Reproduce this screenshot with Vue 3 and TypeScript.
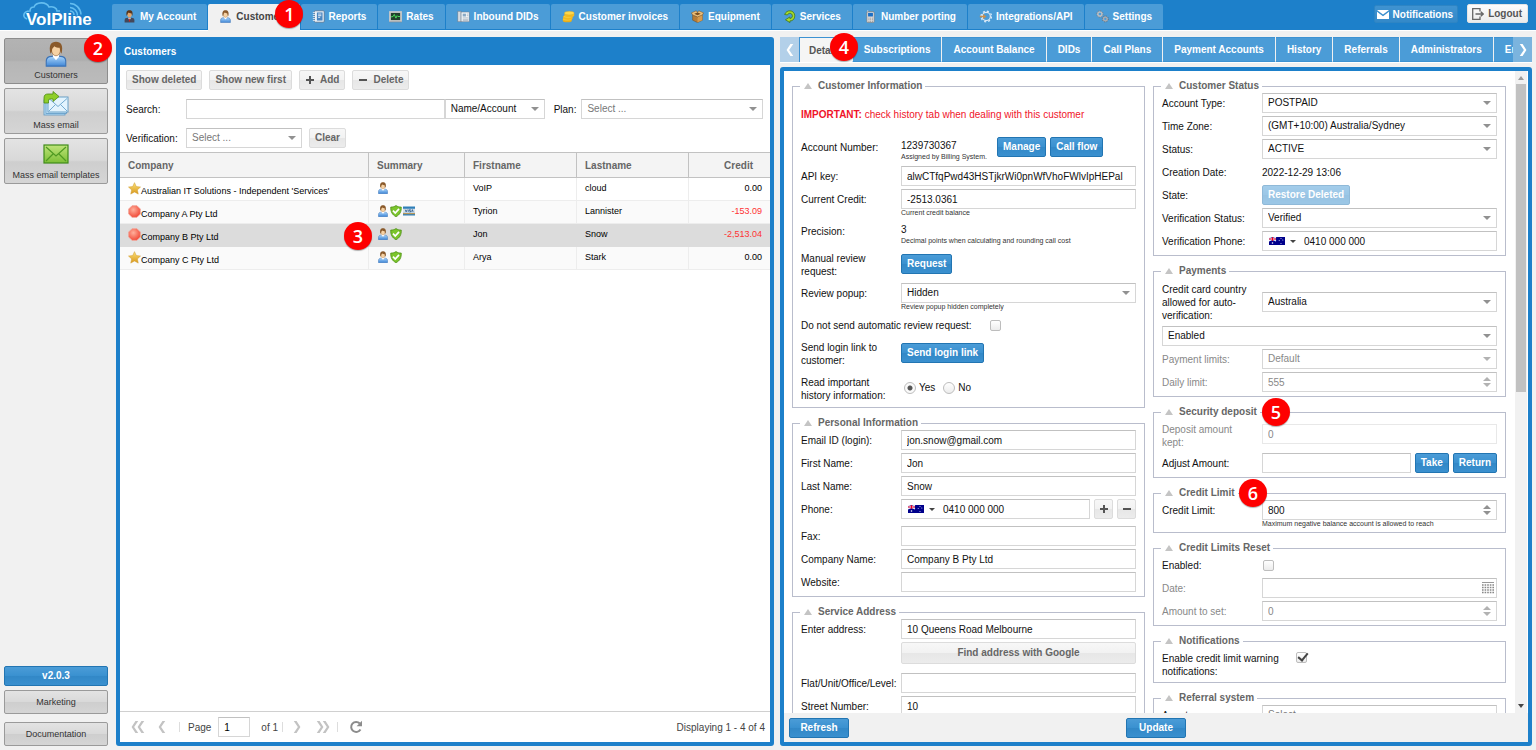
<script setup lang="ts">
import { ref } from 'vue'

interface NavTab {
  label: string
  icon: string
  badge?: number
}

interface Customer {
  company: string
  mark: 'star' | 'stop'
  summary: string[]
  first: string
  last: string
  credit: string
  badge?: number
}

const navTabs: NavTab[] = [
  { label: 'My Account', icon: 'user-dark' },
  { label: 'Customers', icon: 'user', badge: 1 },
  { label: 'Reports', icon: 'report' },
  { label: 'Rates', icon: 'rates' },
  { label: 'Inbound DIDs', icon: 'dids' },
  { label: 'Customer invoices', icon: 'coins' },
  { label: 'Equipment', icon: 'box' },
  { label: 'Services', icon: 'services' },
  { label: 'Number porting', icon: 'phone' },
  { label: 'Integrations/API', icon: 'api' },
  { label: 'Settings', icon: 'gears' },
]
const activeNav = ref('Customers')

const sideItems = [
  { label: 'Customers', icon: 'user', badge: 2 },
  { label: 'Mass email', icon: 'mails' },
  { label: 'Mass email templates', icon: 'mail-green' },
]
const activeSide = ref('Customers')

const detailTabs = [
  'Details', 'Subscriptions', 'Account Balance', 'DIDs', 'Call Plans', 'Payment Accounts',
  'History', 'Referrals', 'Administrators', 'Endpoints',
]
const activeDetail = ref('Details')

const customers: Customer[] = [
  { company: "Australian IT Solutions - Independent 'Services'", mark: 'star', summary: ['user'], first: 'VoIP', last: 'cloud', credit: '0.00' },
  { company: 'Company A Pty Ltd', mark: 'stop', summary: ['user', 'shield', 'card'], first: 'Tyrion', last: 'Lannister', credit: '-153.09' },
  { company: 'Company B Pty Ltd', mark: 'stop', summary: ['user', 'shield'], first: 'Jon', last: 'Snow', credit: '-2,513.04', badge: 3 },
  { company: 'Company C Pty Ltd', mark: 'star', summary: ['user', 'shield'], first: 'Arya', last: 'Stark', credit: '0.00' },
]
const selected = ref('Company B Pty Ltd')
const readInfo = ref('yes')
</script>

<template>
  <svg class="sprite" aria-hidden="true">
    <defs>
      <linearGradient id="gBlue" x1="0" y1="0" x2="0" y2="1"><stop offset="0" stop-color="#a9d4fa" /><stop offset="1" stop-color="#3f86d6" /></linearGradient>
      <linearGradient id="gGold" x1="0" y1="0" x2="0" y2="1"><stop offset="0" stop-color="#fbe27a" /><stop offset="1" stop-color="#d9981c" /></linearGradient>
      <radialGradient id="gRed" cx=".4" cy=".35" r=".7"><stop offset="0" stop-color="#ffb09c" /><stop offset="1" stop-color="#f04432" /></radialGradient>
      <linearGradient id="gGreen" x1="0" y1="0" x2="0" y2="1"><stop offset="0" stop-color="#bfe47a" /><stop offset="1" stop-color="#7cbf36" /></linearGradient>
    </defs>
    <symbol id="user" viewBox="0 0 16 16">
      <path d="M2 15.500v-3c0-2 1.600-3 3.500-3h5c2 0 3.500 1 3.500 3v3z" fill="url(#gBlue)" stroke="#3c74b8" stroke-width=".7" />
      <path d="M6 9.500l2 2.300 2-2.300-.5-1.500h-3z" fill="#fff" />
      <ellipse cx="8" cy="5.300" rx="2.800" ry="3.800" fill="#f6d2a4" stroke="#a06a35" stroke-width=".4" />
      <path d="M4.600 7.800C3.300 2.500 5 .4 8 .4s4.700 2.100 3.400 7.400c-.8-1-1-2.300-1.100-3.600C9 4.200 7.700 3.900 7 3.200 6.300 4 5.700 4.600 5.600 5.200c0 1-.3 2-1 2.600z" fill="#8a5a2b" />
    </symbol>
    <symbol id="user-dark" viewBox="0 0 16 16">
      <path d="M2 15.500v-3c0-2 1.600-3 3.500-3h5c2 0 3.500 1 3.500 3v3z" fill="#44485a" />
      <path d="M6.200 9.500L8 13l1.800-3.500z" fill="#f0f0f0" /><path d="M7.600 10.500h.8l.4 3.500H7.200z" fill="#c22" />
      <ellipse cx="8" cy="5.300" rx="2.800" ry="3.800" fill="#e2a76f" />
      <path d="M4.600 7.500C3.300 2.500 5 .4 8 .4s4.700 2.100 3.400 7.100L10.300 4C9 4.200 7.500 3.800 7 3.200 6.300 4 5.700 4.600 5.600 5.200z" fill="#5b3518" />
    </symbol>
    <symbol id="report" viewBox="0 0 16 16">
      <rect x="3" y="1" width="12" height="14" rx="1" fill="#eef5fb" stroke="#52708e" stroke-width="1" />
      <rect x="6" y="3" width="7" height="10" fill="#4a86c0" /><path d="M7.500 5h4M7.500 7h4M7.500 9h2.500" stroke="#fff" stroke-width="1" />
      <path d="M1 3h3M1 5.500h3M1 8h3M1 10.500h3M1 13h3" stroke="#dfe6ee" stroke-width="1.100" />
    </symbol>
    <symbol id="rates" viewBox="0 0 16 16">
      <rect x="1.200" y="2.500" width="13.600" height="11" fill="#20402c" stroke="#c9c9c9" stroke-width="2.200" /><path d="M.3 14.700h15.400" stroke="#8a8a8a" stroke-width=".8" />
      <path d="M2.500 8.500l2.500-.5 1.500-2.500 2 4.500 1.500-3 1 1h2.500" fill="none" stroke="#4be05a" stroke-width="1.200" />
    </symbol>
    <symbol id="dids" viewBox="0 0 16 16">
      <rect x="1" y="1.500" width="4" height="13" fill="#d4dbe2" stroke="#6e7f90" stroke-width=".7" /><rect x="5" y="2.500" width="10" height="12" fill="#f5f8fa" stroke="#6e7f90" stroke-width=".7" />
      <rect x="7" y="4.500" width="4" height="3.500" fill="#89a9c4" /><path d="M12 5h2M12 7h2M7 9.700h7M7 11.500h7M7 13h7" stroke="#8797a6" stroke-width=".7" />
    </symbol>
    <symbol id="coins" viewBox="0 0 16 16">
      <path d="M1 11.500v2c0 1 2.400 1.700 5.500 1.700s5.500-.7 5.500-1.700v-2z" fill="#e8ad18" /><ellipse cx="6.500" cy="11.300" rx="5.500" ry="2" fill="#fbd03a" stroke="#d9a01a" stroke-width=".4" />
      <path d="M1.500 8v2.500c0 1 2.400 1.700 5.800 1.700s5.700-.7 5.700-1.700V8z" fill="#f3bb22" /><ellipse cx="7.300" cy="8" rx="5.700" ry="2" fill="#fbd03a" stroke="#d9a01a" stroke-width=".4" />
      <path d="M3 4v3c0 1 2.400 1.700 6 1.700S15 8 15 7V4z" fill="#f3bb22" /><ellipse cx="9" cy="3.800" rx="6" ry="2.300" fill="#fdd84c" stroke="#d9a01a" stroke-width=".4" />
    </symbol>
    <symbol id="box" viewBox="0 0 16 16">
      <path d="M2 6l6 2.500L14 6v6.500L8 15.500l-6-3z" fill="#b77c35" stroke="#70471a" stroke-width=".6" /><path d="M8 8.500v7l6-3V6z" fill="#d69b4e" />
      <path d="M2 6L.5 3.500 6.500 1 8 3.200 9.500 1l6 2.500L14 6 8 8.500z" fill="#ecc07a" stroke="#70471a" stroke-width=".6" /><path d="M4 4.600L8 3.200l4 1.400L8 6.500z" fill="#7c4d1d" />
    </symbol>
    <symbol id="services" viewBox="0 0 16 16">
      <path d="M2 5.500C3.500 2 6 1 8.500 1c3.500 0 6 2.800 6 6.200 0 3.800-2.500 6.300-6 6.300v2L3 12l5.500-3.500v2c1.700 0 3-1.300 3-3.200 0-1.800-1.200-3.200-3-3.200-1.400 0-2.300.6-3 2z" fill="#a5d92b" stroke="#3f6f12" stroke-width=".9" />
    </symbol>
    <symbol id="phone" viewBox="0 0 16 16">
      <path d="M4.500 3V.5" stroke="#ddd" stroke-width="1.500" /><rect x="3.500" y="2" width="9" height="13.500" rx="1.500" fill="#e1e1e1" stroke="#777" stroke-width=".8" /><rect x="5" y="3.500" width="6" height="4.500" fill="#1c6fc4" />
      <path d="M5.500 10h1.200m1 0h1.200m1 0h1M5.500 12h1.200m1 0h1.200m1 0h1M5.500 14h1.200m1 0h1.200m1 0h1" stroke="#777" stroke-width="1" />
    </symbol>
    <symbol id="api" viewBox="0 0 16 16">
      <circle cx="9" cy="8" r="5" fill="none" stroke="#d8e9f7" stroke-width="1.500" /><circle cx="9" cy="8" r="6.500" fill="none" stroke="#d8e9f7" stroke-width="1.600" stroke-dasharray="2.500 2.600" />
      <path d="M1 7h4V5l4 3-4 3V9H1z" fill="#c98f4d" />
    </symbol>
    <symbol id="gears" viewBox="0 0 16 16">
      <circle cx="4.800" cy="5" r="2.600" fill="none" stroke="#b9bec4" stroke-width="2" /><circle cx="4.800" cy="5" r="4" fill="none" stroke="#7b8188" stroke-width="1.200" stroke-dasharray="1.500 1.600" />
      <circle cx="11.500" cy="11" r="2.400" fill="none" stroke="#a8adb4" stroke-width="2" /><circle cx="11.500" cy="11" r="3.700" fill="none" stroke="#666c73" stroke-width="1.200" stroke-dasharray="1.400 1.500" />
    </symbol>
    <symbol id="mails" viewBox="0 0 26 26">
      <rect x="1" y="9" width="21" height="15" fill="#b9def5" stroke="#5c97c2" stroke-width=".8" /><rect x="3" y="7.500" width="20.500" height="15" fill="#cbe8fa" stroke="#5c97c2" stroke-width=".8" /><rect x="5" y="6" width="20" height="15" fill="#e3f4fe" stroke="#5c97c2" stroke-width=".9" />
      <path d="M6 7.500l9 8 9-8M6 20l6.500-6.500M24 20l-6.500-6.500" fill="none" stroke="#74acd2" stroke-width="1" />
      <path d="M1 12V7c0-3 1.500-4 4-4h5V.5L16 5.500l-6 5V8H7C5.500 8 5.500 9 5.500 12z" fill="#8fce2a" stroke="#4c8c12" stroke-width=".8" />
    </symbol>
    <symbol id="mail-green" viewBox="0 0 26 26">
      <rect x="1" y="4" width="24" height="18" fill="url(#gGreen)" stroke="#3f8b1a" stroke-width="1.200" /><path d="M3 6l10 9 10-9M3 20l7.500-7.500M23 20l-7.500-7.500" fill="none" stroke="#4f9a22" stroke-width="1.200" />
    </symbol>
    <symbol id="star" viewBox="0 0 16 16"><path d="M8 .8l2.200 4.800 5.200.6-3.900 3.500 1.100 5.200L8 12.300l-4.600 2.600 1.100-5.200L.6 6.200l5.200-.6z" fill="url(#gGold)" stroke="#d09a2a" stroke-width=".6" /></symbol>
    <symbol id="stop" viewBox="0 0 16 16"><path d="M5 .8h6L15.200 5v6L11 15.200H5L.8 11V5z" fill="url(#gRed)" stroke="#f2a396" stroke-width="1" /></symbol>
    <symbol id="shield" viewBox="0 0 16 16">
      <path d="M8 .8c2 1.400 4.300 2 7 2 .3 6-2 10.500-7 12.700C3 13.300.7 8.800 1 2.800c2.700 0 5-.6 7-2z" fill="#7cc52c" stroke="#4c8f14" stroke-width="1.100" /><path d="M4 7.500l3 3.200 5-5.500" fill="none" stroke="#fff" stroke-width="2.300" />
    </symbol>
    <symbol id="card" viewBox="0 0 16 16">
      <rect x="0" y="2" width="16" height="12" fill="#2f7fb8" /><rect x="0" y="5" width="16" height="5.500" fill="#d5e0ea" /><path d="M3 6.200l1.200 3L5.500 6.200M7 6.200v3M8.500 9.200H10V7.700H8.700V6.200h1.500M11.500 9.200l1-3 1 3" fill="none" stroke="#1b4f86" stroke-width="1" /><rect x="0" y="11" width="16" height="1.200" fill="#e8a33d" />
    </symbol>
    <symbol id="flag" viewBox="0 0 16 8">
      <rect width="16" height="8" fill="#00008b" /><path d="M0 0l7 4M7 0L0 4" stroke="#fff" stroke-width="1.100" /><path d="M3.500 0v4M0 2h7" stroke="#fff" stroke-width="1.600" /><path d="M3.500 0v4M0 2h7" stroke="#e4002b" stroke-width="1" />
      <circle cx="3.500" cy="6" r=".8" fill="#fff" /><g fill="#dfe3ff"><circle cx="12" cy="1.400" r=".5" /><circle cx="10.200" cy="3.400" r=".5" /><circle cx="13.800" cy="3" r=".5" /><circle cx="12" cy="6.500" r=".5" /></g>
    </symbol>
    <symbol id="plus" viewBox="0 0 10 10"><path d="M5 1v8M1 5h8" stroke="#555" stroke-width="2" /></symbol>
    <symbol id="minus" viewBox="0 0 10 10"><path d="M1 5h8" stroke="#555" stroke-width="2" /></symbol>
    <symbol id="chev" viewBox="0 0 9 14"><path d="M8.300 0L3.500 7l4.800 7H5L.5 7 5 0z" fill="currentColor" /></symbol>
  </svg>

  <div class="app">
    <header class="top">
      <a class="logo" href="#" aria-label="VoIPline">
        <svg class="logo-art" viewBox="0 0 112 30" aria-hidden="true">
          <path d="M27 19c-5-2-4-8 3-8 0-3 2-4 4-4C36 2 46 1 49 7c4-1 8 1 8 4h3" fill="none" stroke="#63bdf0" stroke-width="1.600" />
          <g fill="none" stroke="#63bdf0" stroke-width="1.600"><path d="M70 11a4 4 0 0 1 4 4" /><path d="M70 7.500a8 8 0 0 1 7.500 8" /><path d="M70 3.500a11 12 0 0 1 11 11" /></g>
        </svg>
        <span class="logo-text">VoIPline</span>
      </a>
      <nav class="nav">
        <button v-for="t in navTabs" :key="t.label" type="button" class="nav-tab" :class="{ on: t.label === activeNav }" @click="activeNav = t.label">
          <svg class="i13"><use :href="'#' + t.icon" /></svg>
          <span>{{ t.label }}</span>
          <b v-if="t.badge" class="badge b1">{{ t.badge }}</b>
        </button>
      </nav>
      <div class="top-actions">
        <button type="button" class="notify">
          <svg class="i-mail" viewBox="0 0 12 9"><path d="M0 0h12L6 4.500z" fill="#fff" /><path d="M0 1.800l6 4.400 6-4.400V9H0z" fill="#fff" /></svg>
          Notifications
        </button>
        <button type="button" class="logout">
          <svg class="i12" viewBox="0 0 12 12"><path d="M8 3.500V.7H.7v10.600H8V8.500M3.500 6h7.500M8.800 3.700L11.200 6 8.800 8.300" fill="none" stroke="#666" stroke-width="1.300" /></svg>
          Logout
        </button>
      </div>
    </header>

    <main class="body">
      <aside class="side">
        <button v-for="s in sideItems" :key="s.label" type="button" class="side-btn" :class="{ on: s.label === activeSide }" @click="activeSide = s.label">
          <svg class="i26"><use :href="'#' + s.icon" /></svg>
          <span>{{ s.label }}</span>
          <b v-if="s.badge" class="badge b2">{{ s.badge }}</b>
        </button>
        <div class="side-foot">
          <button type="button" class="btn blue">v2.0.3</button>
          <button type="button" class="side-link">Marketing</button>
          <button type="button" class="side-link doc">Documentation</button>
        </div>
      </aside>

      <section class="panel list">
        <h1 class="panel-title">Customers</h1>
        <div class="filters">
          <div class="line">
            <button type="button" class="btn">Show deleted</button>
            <button type="button" class="btn">Show new first</button>
            <button type="button" class="btn"><svg class="i10"><use href="#plus" /></svg>Add</button>
            <button type="button" class="btn"><svg class="i10"><use href="#minus" /></svg>Delete</button>
          </div>
          <div class="line search-line">
            <label class="flabel" for="search">Search:</label>
            <input id="search" class="field grow-search" type="text">
            <span class="combo by"><select aria-label="Search by"><option>Name/Account</option></select></span>
            <label class="plan-label" for="plan">Plan:</label>
            <span class="combo plan muted"><select id="plan"><option>Select ...</option></select></span>
          </div>
          <div class="line">
            <label class="flabel" for="verif">Verification:</label>
            <span class="combo verif muted"><select id="verif"><option>Select ...</option></select></span>
            <button type="button" class="btn">Clear</button>
          </div>
        </div>
        <div class="grid-wrap">
          <table class="grid">
            <colgroup><col class="c1"><col class="c2"><col class="c3"><col class="c3"><col class="c4"></colgroup>
            <thead>
              <tr><th>Company</th><th>Summary</th><th>Firstname</th><th>Lastname</th><th class="num">Credit</th></tr>
            </thead>
            <tbody>
              <tr v-for="c in customers" :key="c.company" :class="{ sel: c.company === selected }" @click="selected = c.company">
                <td class="company">
                  <span class="cell"><svg class="i13"><use :href="'#' + c.mark" /></svg><span class="cname">{{ c.company }}</span></span>
                  <b v-if="c.badge" class="badge b3">{{ c.badge }}</b>
                </td>
                <td><span class="cell"><svg v-for="s in c.summary" :key="s" class="i12"><use :href="'#' + s" /></svg></span></td>
                <td>{{ c.first }}</td>
                <td>{{ c.last }}</td>
                <td class="num" :class="{ neg: c.credit.startsWith('-') }">{{ c.credit }}</td>
              </tr>
            </tbody>
          </table>
        </div>
        <footer class="pager">
          <button type="button" class="pg wide" aria-label="First page"><svg class="chev"><use href="#chev" /></svg><svg class="chev"><use href="#chev" /></svg></button>
          <button type="button" class="pg" aria-label="Previous page"><svg class="chev"><use href="#chev" /></svg></button>
          <i class="sep" />
          <label for="page">Page</label>
          <input id="page" class="field page" type="text" value="1">
          <span>of 1</span>
          <i class="sep near" />
          <button type="button" class="pg" aria-label="Next page"><svg class="chev flip"><use href="#chev" /></svg></button>
          <button type="button" class="pg wide" aria-label="Last page"><svg class="chev flip"><use href="#chev" /></svg><svg class="chev flip"><use href="#chev" /></svg></button>
          <i class="sep" />
          <button type="button" class="pg" aria-label="Reload">
            <svg class="i14" viewBox="0 0 14 14"><path d="M11.500 9.500A5 5 0 1 1 10.800 3.500" fill="none" stroke="#8c8c8c" stroke-width="2" /><path d="M13 .8v5.400H7.600z" fill="#8c8c8c" /></svg>
          </button>
          <span class="shown">Displaying 1 - 4 of 4</span>
        </footer>
      </section>

      <section class="detail">
        <div class="strip">
          <button type="button" class="scroller" aria-label="Scroll tabs left"><svg class="chev"><use href="#chev" /></svg></button>
          <div class="tabs">
            <button v-for="t in detailTabs" :key="t" type="button" class="tab" :class="{ on: t === activeDetail }" @click="activeDetail = t">{{ t }}</button>
          </div>
          <button type="button" class="scroller next" aria-label="Scroll tabs right"><svg class="chev flip"><use href="#chev" /></svg></button>
          <b class="badge b4">4</b>
        </div>

        <div class="panel form-panel">
          <div class="scroll">
            <form class="columns" @submit.prevent>
              <div class="col">
                <fieldset>
                  <legend>Customer Information</legend>
                  <p class="important"><b>IMPORTANT:</b> check history tab when dealing with this customer</p>
                  <div class="row h-note">
                    <span class="lab">Account Number:</span>
                    <div class="inline">
                      <div class="acc"><output class="val">1239730367</output><small>Assigned by Billing System.</small></div>
                      <button type="button" class="btn blue">Manage</button>
                      <button type="button" class="btn blue">Call flow</button>
                    </div>
                  </div>
                  <div class="row"><label class="lab" for="key">API key:</label><input id="key" class="field" type="text" value="alwCTfqPwd43HSTjkrWi0pnWfVhoFWlvIpHEPal"></div>
                  <div class="row h-help"><label class="lab" for="credit">Current Credit:</label><div><input id="credit" class="field" type="text" value="-2513.0361"><small>Current credit balance</small></div></div>
                  <div class="row h-prec"><span class="lab">Precision:</span><div><output class="val">3</output><small>Decimal points when calculating and rounding call cost</small></div></div>
                  <div class="row h-prec two"><span class="lab multi">Manual review request:</span><button type="button" class="btn blue">Request</button></div>
                  <div class="row h-help"><label class="lab" for="popup">Review popup:</label><div><span class="combo"><select id="popup"><option>Hidden</option></select></span><small>Review popup hidden completely</small></div></div>
                  <div class="row wide-label h-check"><label class="lab" for="noauto">Do not send automatic review request:</label><input id="noauto" class="tick" type="checkbox"></div>
                  <div class="row h-login two"><span class="lab multi">Send login link to customer:</span><button type="button" class="btn blue">Send login link</button></div>
                  <div class="row two h-read">
                    <span id="readinfo" class="lab multi">Read important history information:</span>
                    <div class="radios" role="radiogroup" aria-labelledby="readinfo">
                      <label><input v-model="readInfo" type="radio" name="read" value="yes">Yes</label>
                      <label><input v-model="readInfo" type="radio" name="read" value="no">No</label>
                    </div>
                  </div>
                </fieldset>

                <fieldset>
                  <legend>Personal Information</legend>
                  <div class="row"><label class="lab" for="email">Email ID (login):</label><input id="email" class="field" type="text" value="jon.snow@gmail.com"></div>
                  <div class="row"><label class="lab" for="fn">First Name:</label><input id="fn" class="field" type="text" value="Jon"></div>
                  <div class="row"><label class="lab" for="ln">Last Name:</label><input id="ln" class="field" type="text" value="Snow"></div>
                  <div class="row h-phone">
                    <label class="lab" for="phone-no">Phone:</label>
                    <div class="inline phones">
                      <span class="phone"><button type="button" class="country" aria-label="Country"><svg class="flag"><use href="#flag" /></svg></button><input id="phone-no" type="text" value="0410 000 000"></span>
                      <button type="button" class="btn sq" aria-label="Add phone"><svg class="i10"><use href="#plus" /></svg></button>
                      <button type="button" class="btn sq" aria-label="Remove phone"><svg class="i10"><use href="#minus" /></svg></button>
                    </div>
                  </div>
                  <div class="row"><label class="lab" for="fax">Fax:</label><input id="fax" class="field" type="text"></div>
                  <div class="row"><label class="lab" for="comp">Company Name:</label><input id="comp" class="field" type="text" value="Company B Pty Ltd"></div>
                  <div class="row"><label class="lab" for="web">Website:</label><input id="web" class="field" type="text"></div>
                </fieldset>

                <fieldset>
                  <legend>Service Address</legend>
                  <div class="row"><label class="lab" for="addr">Enter address:</label><input id="addr" class="field" type="text" value="10 Queens Road Melbourne"></div>
                  <div class="row h-find"><span /><button type="button" class="btn find">Find address with Google</button></div>
                  <div class="row"><label class="lab" for="flat">Flat/Unit/Office/Level:</label><input id="flat" class="field" type="text"></div>
                  <div class="row"><label class="lab" for="street">Street Number:</label><input id="street" class="field" type="text" value="10"></div>
                </fieldset>
              </div>

              <div class="col">
                <fieldset>
                  <legend>Customer Status</legend>
                  <div class="row"><label class="lab" for="atype">Account Type:</label><span class="combo"><select id="atype"><option>POSTPAID</option></select></span></div>
                  <div class="row"><label class="lab" for="tz">Time Zone:</label><span class="combo"><select id="tz"><option>(GMT+10:00) Australia/Sydney</option></select></span></div>
                  <div class="row"><label class="lab" for="status">Status:</label><span class="combo"><select id="status"><option>ACTIVE</option></select></span></div>
                  <div class="row"><span class="lab">Creation Date:</span><output class="lab">2022-12-29 13:06</output></div>
                  <div class="row"><span class="lab">State:</span><button type="button" class="btn blue" disabled>Restore Deleted</button></div>
                  <div class="row"><label class="lab" for="vs">Verification Status:</label><span class="combo"><select id="vs"><option>Verified</option></select></span></div>
                  <div class="row"><label class="lab" for="vp">Verification Phone:</label><span class="phone"><button type="button" class="country" aria-label="Country"><svg class="flag"><use href="#flag" /></svg></button><input id="vp" type="text" value="0410 000 000"></span></div>
                </fieldset>

                <fieldset>
                  <legend>Payments</legend>
                  <div class="row h-country"><label class="lab multi" for="cc">Credit card country allowed for auto-verification:</label><span class="combo"><select id="cc"><option>Australia</option></select></span></div>
                  <div class="row full"><span class="combo"><select aria-label="Auto-verification"><option>Enabled</option></select></span></div>
                  <div class="row off"><label class="lab" for="pl">Payment limits:</label><span class="combo"><select id="pl" disabled><option>Default</option></select></span></div>
                  <div class="row off"><label class="lab" for="dl">Daily limit:</label><span class="spin"><input id="dl" class="field" type="text" value="555" disabled></span></div>
                </fieldset>

                <fieldset>
                  <legend>Security deposit<b class="badge b5">5</b></legend>
                  <div class="row off h-deposit"><label class="lab multi" for="dep">Deposit amount kept:</label><input id="dep" class="field faint" type="text" value="0" disabled></div>
                  <div class="row"><label class="lab" for="adj">Adjust Amount:</label>
                    <div class="inline adj"><input id="adj" class="field" type="text"><button type="button" class="btn blue">Take</button><button type="button" class="btn blue">Return</button></div>
                  </div>
                </fieldset>

                <fieldset>
                  <legend>Credit Limit<b class="badge b6">6</b></legend>
                  <div class="row"><label class="lab" for="cl">Credit Limit:</label><div><span class="spin"><input id="cl" class="field" type="text" value="800"></span><small>Maximum negative balance account is allowed to reach</small></div></div>
                </fieldset>

                <fieldset>
                  <legend>Credit Limits Reset</legend>
                  <div class="row"><label class="lab" for="en">Enabled:</label><input id="en" class="tick" type="checkbox"></div>
                  <div class="row off"><label class="lab" for="date">Date:</label>
                    <span class="date"><input id="date" class="field" type="text" disabled>
                      <svg class="cal" viewBox="0 0 12 12"><path d="M0 .5h12" stroke="#999" stroke-width="1" /><path d="M0 3h12M0 5.500h12M0 8h12M0 10.500h12" stroke="#888" stroke-width="1.400" stroke-dasharray="1.600 1" /></svg>
                    </span>
                  </div>
                  <div class="row off"><label class="lab" for="amt">Amount to set:</label><span class="spin"><input id="amt" class="field" type="text" value="0" disabled></span></div>
                </fieldset>

                <fieldset>
                  <legend>Notifications</legend>
                  <div class="row h-notif"><label class="lab multi" for="warn">Enable credit limit warning notifications:</label><input id="warn" class="tick" type="checkbox" checked></div>
                </fieldset>

                <fieldset>
                  <legend>Referral system</legend>
                  <div class="row"><label class="lab" for="agent">Agent:</label><span class="combo muted"><select id="agent"><option>Select ...</option></select></span></div>
                </fieldset>
              </div>
            </form>
            <div class="bar" aria-hidden="true"><i class="up" /><i class="thumb" /><i class="down" /></div>
          </div>
          <footer class="form-foot">
            <button type="button" class="btn blue">Refresh</button>
            <button type="button" class="btn blue">Update</button>
            <span class="pad" />
          </footer>
        </div>
      </section>
    </main>
  </div>
</template>

<style>
html, body { margin: 0; height: 100%; overflow: hidden; }
</style>

<style scoped>
* { box-sizing: border-box; }
button, input, select { font: inherit; color: inherit; margin: 0; }
button { cursor: pointer; padding: 0; white-space: nowrap; }
svg { display: block; flex: none; }
.sprite { position: absolute; width: 0; height: 0; }
.app { height: 100vh; display: flex; flex-direction: column; background: #f1f1f1; font: 10px/13px "Liberation Sans", Arial, sans-serif; color: #111; }
.i10 { width: 10px; height: 10px; }
.i12 { width: 12px; height: 12px; }
.i13 { width: 13px; height: 13px; }
.i14 { width: 14px; height: 14px; }
.i26 { width: 26px; height: 26px; }
.badge { position: absolute; z-index: 5; width: 28px; height: 28px; border-radius: 50%; background: #fe0000; color: #fff; font: 600 18px/28px "Open Sans", sans-serif; text-align: center; box-shadow: 0 1px 1px rgba(0, 0, 0, .3); }

/* top bar */
.top { flex: none; height: 31px; display: flex; align-items: stretch; background: #1d80ca; border-bottom: 1px solid #fff; }
.logo { flex: none; width: 112px; position: relative; text-decoration: none; }
.logo-art { width: 112px; height: 30px; }
.logo-text { position: absolute; left: 26px; top: 10px; font: bold 17px/20px "Liberation Sans", Arial, sans-serif; color: #fff; }
.nav { display: flex; gap: 1px; padding-top: 4px; }
.nav-tab { position: relative; display: flex; align-items: center; gap: 4px; border: 0; border-bottom: 1px solid #1d80ca; border-radius: 2px 2px 0 0; background: #4b9cd7; color: #fff; padding: 0 11px 1px 11px; font-weight: bold; }
.nav-tab.on { background: #f1f1f1; border-color: #f1f1f1; color: #444; margin-bottom: -1px; }
.b1 { left: 67px; top: -4px; }
.top-actions { margin-left: auto; display: flex; gap: 9px; padding: 4px 8px 0 0; align-items: flex-start; font-weight: bold; }
.notify, .logout { display: flex; align-items: center; gap: 4px; border-radius: 2px; height: 19px; }
.notify { height: 18px; margin-top: 1px; padding: 0 4px 0 2px; border: 1px solid #2e85c4; background: linear-gradient(#3f93d1, #3389c9); color: #fff; }
.logout { padding: 0 5px 0 4px; border: 1px solid #e4e4e4; background: linear-gradient(#fcfcfc, #ececec); color: #555; }
.i-mail { width: 12px; height: 9px; }

/* columns */
.body { flex: 1; min-height: 0; display: flex; padding: 6px 4px 4px; }
.side { flex: none; width: 104px; margin-right: 8px; padding-top: 1px; display: flex; flex-direction: column; gap: 4px; font-size: 9px; }
.side-btn, .side-link { position: relative; border: 1px solid #9a9a9a; border-radius: 2px; color: #333; background: linear-gradient(#e3e3e3, #d9d9d9 48%, #cecece 52%, #d5d5d5); }
.side-btn { height: 46px; display: flex; flex-direction: column; align-items: center; justify-content: space-between; padding: 2px 0 1px; }
.side-btn.on { background: linear-gradient(#b3b3b3, #aeaeae 48%, #b6b6b6 52%, #bbb); border-color: #8d8d8d; }
.b2 { right: -5px; top: -5px; }
.side-foot { margin-top: auto; display: flex; flex-direction: column; gap: 4px; }
.side-link { height: 24px; }
.side-link.doc { margin-top: 4px; }

.panel { border: 4px solid #1d80ca; border-radius: 3px; background: #fff; min-height: 0; display: flex; flex-direction: column; }
.list { flex: 650 1 0; min-width: 0; }
.panel-title { flex: none; margin: 0; height: 24px; padding-left: 4px; font-size: 10px; line-height: 21px; color: #fff; background: #1d80ca; }

.btn { height: 20px; padding: 0 5px; display: inline-flex; align-items: center; justify-content: center; gap: 5px; border: 1px solid #dcdcdc; border-radius: 2px; background: linear-gradient(#f7f7f7, #f2f2f2 48%, #e7e7e7 52%, #ececec); color: #666; font-size: 10px; font-weight: bold; line-height: 14px; }
.btn.blue { border-color: #2275b2; background: linear-gradient(#4b9cd7, #3a91d0 48%, #3288c7 52%, #3a90cf); color: #fff; }
.btn.blue:disabled { opacity: .5; }
.field, .combo select { width: 100%; height: 20px; border: 1px solid #d6d6d6; border-top-color: #c1c1c1; border-radius: 0; background: #fff; padding: 0 5px; line-height: 18px; display: block; min-width: 0; outline: 0; }
.combo { position: relative; display: block; min-width: 0; }
.combo select { appearance: none; }
.combo::after { content: ""; position: absolute; right: 6px; top: 8px; border: 4px solid transparent; border-top-color: #919191; border-bottom: 0; pointer-events: none; }
.muted select { color: #777; }

.filters { flex: none; padding: 5px 7px 4px 6px; display: grid; gap: 9px; }
.line { display: flex; align-items: center; gap: 7px; }
.search-line { gap: 0; }
.flabel { flex: none; width: 60px; }
.line:not(.search-line) .flabel { margin-right: -7px; }
.grow-search { flex: 250 1 0; width: 0; }
.by { flex: none; width: 100px; }
.plan-label { padding: 0 5px 0 9px; }
.plan { flex: 184 1 0; }
.verif { width: 116px; }

.grid-wrap { flex: 1; min-height: 0; overflow: hidden; }
.grid { width: 100%; table-layout: fixed; border-collapse: separate; border-spacing: 0; font-size: 9px; }
.c1 { width: 249px; }
.c2 { width: 96px; }
.c3 { width: 112px; }
.c4 { width: 81px; }
.grid th { height: 26px; padding: 0 8px; text-align: left; font-size: 10px; color: #666; background: #f4f4f4; border: solid #c2c2c2; border-width: 1px 1px 1px 0; }
.grid th:last-child { border-right: 0; padding-right: 17px; }
.grid td { height: 23px; padding: 0 8px 2px; border-right: 1px solid #ededed; border-bottom: 1px solid #ededed; line-height: 12px; white-space: nowrap; color: #000; }
.grid td:last-child { border-right: 0; }
.grid tr:nth-child(even) td { background: #fafafa; }
.grid tr.sel td { background: #dcdcdc; border-color: #dcdcdc; }
.grid .num { text-align: right; }
.grid td.neg { color: #f33; }
.grid .company { position: relative; }
.cell { display: flex; align-items: center; gap: 1px; }
.company .cell { gap: 0; }
.cname { padding-top: 6px; }
.b3 { right: -4px; top: -2px; }

.pager { flex: none; height: 31px; border-top: 1px solid #d0d0d0; display: flex; align-items: center; gap: 7px; padding: 0 5px 0 9px; color: #444; }
.pg { width: 20px; height: 20px; border: 0; background: none; display: flex; align-items: center; justify-content: center; color: #c3c3c3; }
.pg.wide { width: 15px; margin: 0 0 0 1px; }
.chev { width: 8px; height: 12px; }
.pg.wide .chev { margin: 0 -1px; }
.flip { transform: rotate(180deg); }
.sep { width: 1px; height: 10px; background: #ddd; margin: 0 1px 0 0; }
.pager .field.page { width: 32px; flex: none; color: #000; }
.near { margin: 0 -3px 0 -3px; }
.pager span { padding-left: 4px; }
.pager .shown { margin-left: auto; }

/* detail tabs */
.detail { flex: 752 1 0; min-width: 0; margin-left: 6px; display: flex; flex-direction: column; }
.strip { flex: none; position: relative; display: flex; height: 26px; margin-bottom: 4px; border-bottom: 1px solid #fff; box-shadow: inset 0 -1px #b9d6ec; }
.tabs { flex: 1; min-width: 0; display: flex; gap: 1px; overflow: hidden; }
.tab { flex: none; height: 25px; padding: 0 11px; border: 1px solid #3d92d2; border-width: 1px 0; background: #4b9cd7; color: #fff; font-weight: bold; }
.tab.on { background: #f5f5f5; color: #555; padding: 0 10px 0 9px; border-width: 1px 0 0 1px; }
.scroller { flex: none; width: 19px; height: 25px; border: 0; background: #b3d0e9; color: #fff; display: flex; align-items: center; justify-content: center; }
.scroller.next { position: absolute; right: 0; top: 0; background: #7bb4de; }
.b4 { left: 50px; top: -4px; }

.form-panel { flex: 1; }
.scroll { flex: 1; min-height: 0; display: flex; overflow: hidden; }
.columns { flex: 1; min-width: 0; height: 100%; overflow: hidden; display: grid; grid-template-columns: 1fr 1fr; gap: 8px; align-items: start; padding: 8px 9px 0 8px; }
.col { min-width: 0; }
fieldset { margin: 0 0 8px; padding: 0 8px 4px; border: 1px solid #b9bdcc; min-width: 0; }
legend { position: relative; margin-left: -1px; padding: 0 3px 0 18px; height: 14px; line-height: 14px; font-weight: bold; color: #666; }
legend::before { content: ""; position: absolute; left: 4px; top: 4px; border: 4px solid transparent; border-bottom: 6px solid #c4c4c4; border-top: 0; }
.b5 { left: 101px; top: -7px; }
.b6 { left: 78px; top: -7px; }
.row { display: grid; grid-template-columns: 100px minmax(0, 1fr); align-items: start; justify-items: start; min-height: 23px; }
.row:last-child { min-height: 20px; }
.row > div, .row > .combo, .row > .spin, .row > .date, .row > .phone { width: 100%; }
.lab { height: 20px; line-height: 21px; white-space: nowrap; }
.lab.multi { height: auto; line-height: 13px; white-space: normal; padding-right: 8px; }
.important { margin: 0; line-height: 44px; color: #f0142a; }
.val { display: block; padding-top: 2px; line-height: 14px; }
small { display: block; font-size: 7px; line-height: 8px; color: #333; white-space: nowrap; }
.inline { display: flex; gap: 4px; align-items: flex-start; }
.acc { width: 92px; }
.h-note { min-height: 29px; }
.h-help { min-height: 32px; }
.h-prec { min-height: 31px; }
.h-check { min-height: 26px; }
.h-login { min-height: 35px; }
.row.h-read { min-height: 27px; }
.h-phone { min-height: 27px; }
.h-find { min-height: 31px; }
.two .btn, .radios { margin-top: 2px; }
.wide-label { grid-template-columns: 188px 1fr; }
.row.full { grid-template-columns: 1fr; }
.h-country { min-height: 48px; align-items: center; }
.h-deposit { min-height: 34px; }
.h-deposit .lab, .row.h-notif { padding-top: 4px; }
.h-deposit .field { margin-top: 5px; }
.row.h-notif { grid-template-columns: 133px 1fr; min-height: 30px; }
.row.h-notif .tick { margin-top: 0; }
.off .lab, .off .field, .off select { color: #888; opacity: 1; }
.field.faint { border-color: #e8e8e8; }
.off .combo::after, .off .spin::before, .off .spin::after { opacity: .7; }
.adj .field { flex: 1; }
.phones .phone { flex: 1; margin-right: 0; }
.btn.sq { width: 19px; padding: 0; }
.find { width: 100%; height: 22px; }
.phone { display: flex; height: 20px; border: 1px solid #d6d6d6; border-top-color: #c1c1c1; background: #fff; }
.phone input { flex: 1; min-width: 0; border: 0; outline: 0; padding: 0 4px; background: none; }
.country { width: 37px; border: 0; background: none; display: flex; align-items: center; gap: 5px; padding-left: 6px; }
.country::after { content: ""; border: 3px solid transparent; border-top-color: #444; border-bottom: 0; }
.flag { width: 16px; height: 8px; }
.spin, .date { position: relative; display: block; }
.spin::before, .spin::after { content: ""; position: absolute; right: 6px; border: 4px solid transparent; }
.spin::before { top: 5px; border-bottom-color: #919191; border-top: 0; }
.spin::after { top: 11px; border-top-color: #919191; border-bottom: 0; }
.cal { position: absolute; right: 3px; top: 4px; width: 12px; height: 12px; }
.tick, .radios input { appearance: none; width: 11px; height: 11px; border: 1px solid #bdbdbd; border-radius: 2px; background: linear-gradient(#fff, #ececec); margin: 5px 0 0 1px; position: relative; }
.tick:checked::after { content: ""; position: absolute; left: 3px; top: -2px; width: 4px; height: 8px; border: solid #444; border-width: 0 2px 2px 0; transform: rotate(40deg); }
.radios { display: flex; gap: 8px; padding-left: 3px; line-height: 20px; }
.radios label { display: flex; align-items: center; gap: 3px; }
.radios input { width: 12px; height: 12px; border-radius: 50%; margin: 0; }
.radios input:checked { background: radial-gradient(circle, #555 2px, #fafafa 3px); }

.bar { flex: none; width: 12px; margin-right: 1px; background: #f1f1f1; display: flex; flex-direction: column; align-items: center; }
.up, .down { border: 3px solid transparent; }
.up { margin: 5px 0 4px; border-bottom: 4px solid #9a9a9a; border-top: 0; }
.down { margin: auto 0 5px; border-top: 4px solid #444; border-bottom: 0; }
.thumb { width: 10px; height: 48%; background: #c1c1c1; }
.form-foot { flex: none; height: 29px; display: grid; grid-template-columns: 1fr auto 1fr; align-items: center; background: #f1f1f1; padding: 0 5px; }
.form-foot .btn { justify-self: start; width: 60px; }
</style>
